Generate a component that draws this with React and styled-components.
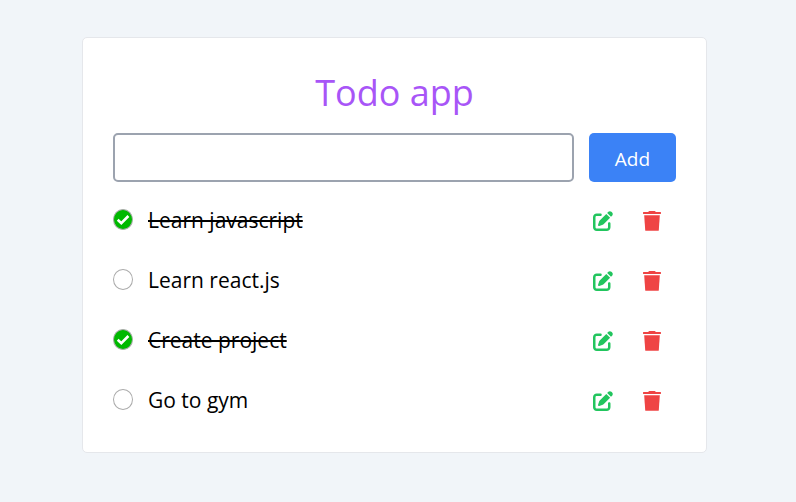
import React, { useState } from "react";
import styled, { createGlobalStyle } from "styled-components";
import { FaPenToSquare } from "react-icons/fa6";

const GlobalStyle = createGlobalStyle`
  *, *::before, *::after { box-sizing: border-box; }
  body {
    margin: 0;
    background: #f1f5f9;
    color: #000;
    font-family: "Segoe UI", "Open Sans", "Noto Sans", sans-serif;
  }
  button, input { font: inherit; }
`;

const Page = styled.main`
  min-height: 100vh;
  padding: 37px 89px 49px 82px;
`;

const Card = styled.section`
  padding: 30px;
  background: #fff;
  border: 1px solid #e5e7eb;
  border-radius: 5px;
`;

const Title = styled.h1`
  margin: 0 0 15px;
  font-size: 36px;
  font-weight: 400;
  line-height: 50px;
  text-align: center;
  color: #a855f7;
`;

const Form = styled.form`
  display: flex;
  gap: 15px;
  margin-bottom: 15px;
`;

const TextInput = styled.input`
  flex: 1;
  min-width: 0;
  height: 49px;
  padding: 0 15px;
  font-size: 20px;
  background: #fff;
  border: 2px solid #9ca3af;
  border-radius: 5px;
`;

const AddButton = styled.button`
  width: 87px;
  height: 49px;
  padding: 2px 0 0;
  font-size: 19px;
  line-height: 28px;
  color: #fff;
  background: #3b82f6;
  border: 0;
  border-radius: 5px;
  cursor: pointer;
`;

const List = styled.ul`
  display: grid;
  gap: 15px;
  margin: 0;
  padding: 0;
  list-style: none;
`;

const Row = styled.li`
  display: flex;
  align-items: center;
  height: 45px;
`;

const TaskLabel = styled.label`
  display: flex;
  flex: 1;
  align-items: center;
  gap: 15px;
  min-width: 0;
  cursor: pointer;
`;

const CheckWrap = styled.span`
  display: grid;
  flex: none;
  width: 20px;
  height: 22px;
  > * { grid-area: 1 / 1; }
`;

const CheckInput = styled.input`
  width: 20px;
  height: 21px;
  margin: 0;
  appearance: none;
  border: 1px solid #ababab;
  border-radius: 50%;
  background: #fff;
  cursor: pointer;
  &:checked { background: #00b900; }
`;

const CheckMark = styled.svg`
  width: 20px;
  height: 21px;
  pointer-events: none;
`;

const TaskText = styled.span`
  font-size: 21px;
  line-height: 30px;
  text-decoration: ${({ $done }) => ($done ? "line-through 2px" : "none")};
`;

const IconButton = styled.button`
  display: flex;
  align-items: center;
  justify-content: center;
  width: 49px;
  height: 45px;
  padding: 2px 0 0;
  font-size: 20px;
  color: ${({ $color }) => $color};
  background: none;
  border: 0;
  cursor: pointer;
`;

const TrashSvg = styled.svg`
  width: 18px;
  height: 20px;
  fill: currentColor;
`;

const initialTasks = [
  { id: 1, text: "Learn javascript", done: true },
  { id: 2, text: "Learn react.js", done: false },
  { id: 3, text: "Create project", done: true },
  { id: 4, text: "Go to gym", done: false },
];

function TrashIcon() {
  return (
    <TrashSvg viewBox="0 0 18 20" aria-hidden="true">
      <path d="M0.4 1H5.2L5.8 0.2Q6 0 6.4 0H11.6Q12 0 12.2 0.2L12.8 1H17.6Q18 1 18 1.4V2.6Q18 3 17.6 3H0.4Q0 3 0 2.6V1.4Q0 1 0.4 1Z" />
      <path d="M1.2 4.2H16.8L15.8 19.2Q15.7 19.8 15.1 19.8H2.9Q2.3 19.8 2.2 19.2Z" />
    </TrashSvg>
  );
}

function Task({ task, onToggle, onEdit, onDelete }) {
  return (
    <Row>
      <TaskLabel>
        <CheckWrap>
          <CheckInput type="checkbox" checked={task.done} onChange={onToggle} />
          {task.done && (
            <CheckMark viewBox="0 0 20 21" aria-hidden="true">
              <path d="M4.7 10.8 8.3 14.2 15.4 7" fill="none" stroke="#fff" strokeWidth="2.6" />
            </CheckMark>
          )}
        </CheckWrap>
        <TaskText $done={task.done}>{task.text}</TaskText>
      </TaskLabel>
      <IconButton type="button" $color="#22c55e" aria-label={`Edit ${task.text}`} onClick={onEdit}>
        <FaPenToSquare />
      </IconButton>
      <IconButton type="button" $color="#ef4444" aria-label={`Delete ${task.text}`} onClick={onDelete}>
        <TrashIcon />
      </IconButton>
    </Row>
  );
}

export default function App() {
  const [tasks, setTasks] = useState(initialTasks);
  const [draft, setDraft] = useState("");
  const [editingId, setEditingId] = useState(null);

  const submit = (event) => {
    event.preventDefault();
    const text = draft.trim();
    if (!text) return;
    setTasks(
      editingId === null
        ? [...tasks, { id: Date.now(), text, done: false }]
        : tasks.map((t) => (t.id === editingId ? { ...t, text } : t))
    );
    setDraft("");
    setEditingId(null);
  };

  return (
    <>
      <GlobalStyle />
      <Page>
        <Card>
          <Title>Todo app</Title>
          <Form onSubmit={submit}>
            <TextInput aria-label="Task" value={draft} onChange={(e) => setDraft(e.target.value)} />
            <AddButton type="submit">Add</AddButton>
          </Form>
          <List>
            {tasks.map((task) => (
              <Task
                key={task.id}
                task={task}
                onToggle={() =>
                  setTasks(tasks.map((t) => (t.id === task.id ? { ...t, done: !t.done } : t)))
                }
                onEdit={() => {
                  setDraft(task.text);
                  setEditingId(task.id);
                }}
                onDelete={() => setTasks(tasks.filter((t) => t.id !== task.id))}
              />
            ))}
          </List>
        </Card>
      </Page>
    </>
  );
}
